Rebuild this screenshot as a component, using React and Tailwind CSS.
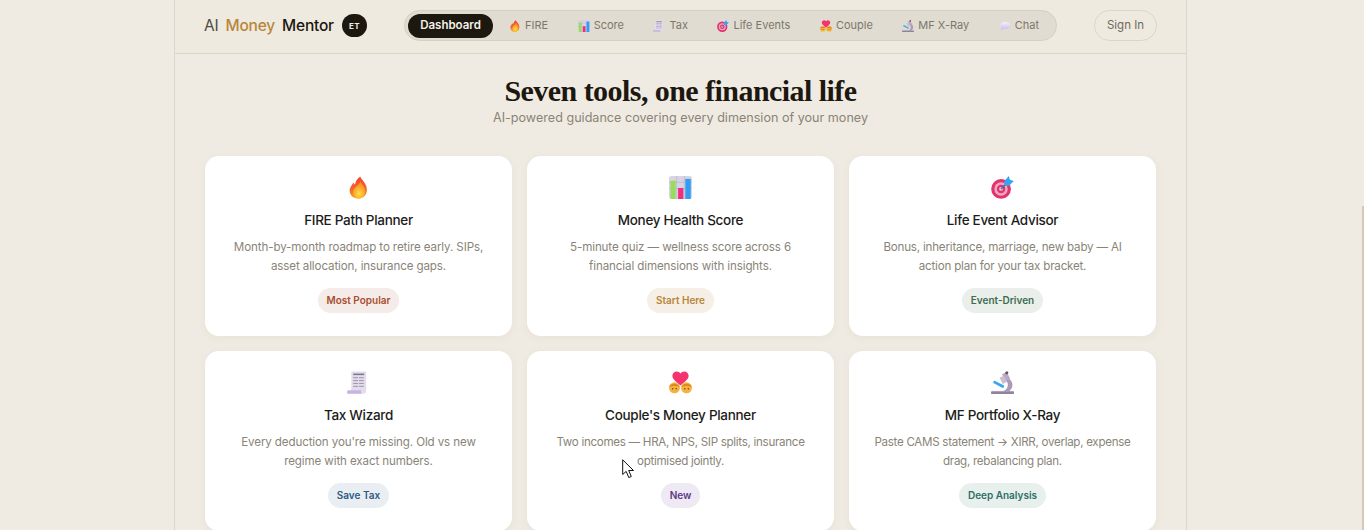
import React from "react";

const Flame = ({ s }) => (
  <svg width={s} height={s} viewBox="0 0 24 24" className="shrink-0">
    <defs>
      <linearGradient id="fl1" x1="0" y1="0" x2="0" y2="1">
        <stop offset="0" stopColor="#f4402e" />
        <stop offset="0.6" stopColor="#f0692c" />
        <stop offset="1" stopColor="#f9a02b" />
      </linearGradient>
      <radialGradient id="fl2" cx="0.5" cy="0.72" r="0.6">
        <stop offset="0" stopColor="#ffe13f" />
        <stop offset="1" stopColor="#fb8a22" />
      </radialGradient>
    </defs>
    <g transform="translate(-2.400 0) scale(1.200 1)">
      <path d="M13.500 0.500c.6 3.600 5.800 6.400 5.800 14 0 5.400-3.400 9-7.600 9-4.400 0-7.400-3.400-7.400-8 0-4 2.200-6 3.200-8.800.5 1 .9 1.800 1.400 2.400C9.400 5.600 11 2.500 13.500.5z" fill="url(#fl1)" />
      <path d="M13.800 5.500c.6 3 4.200 5.400 4.200 10.200 0 4.400-2.700 7.800-5.700 7.800-3.100 0-5.300-2.800-5.300-6.200 0-3 1.900-4.500 3.400-6.800.3-.5 2.600-2.400 3.400-5z" fill="url(#fl2)" />
    </g>
  </svg>
);

const Chart = ({ s }) => (
  <svg width={s} height={s} viewBox="0 0 24 24" className="shrink-0">
    <rect x="0" y="0" width="24" height="24" rx="2.500" fill="#d9d4e4" />
    <path d="M0 6.500h24M0 13h24M8 0v24M16 0v24" stroke="#b9b2c9" strokeWidth="0.7" />
    <rect x="1.500" y="5" width="5.500" height="19" fill="#97dc5c" />
    <rect x="9.500" y="12.500" width="5.500" height="11.500" fill="#ef2f7a" />
    <rect x="17" y="3" width="5.700" height="21" fill="#2f9ef5" />
  </svg>
);

const Target = ({ s }) => (
  <svg width={s} height={s} viewBox="0 0 24 24" className="shrink-0">
    <circle cx="10.500" cy="13.500" r="10.300" fill="#e2326f" />
    <circle cx="10.500" cy="13.500" r="7" fill="#f0a8c0" />
    <circle cx="10.500" cy="13.500" r="4.400" fill="#e2326f" />
    <circle cx="10.500" cy="13.500" r="2" fill="#e9c4d2" />
    <path d="M10.500 13.500 L18 6" stroke="#3a6db5" strokeWidth="1.500" />
    <path d="M13.500 6l5-6 1.300 4 4 1.200-5.300 5.300-4-.8z" fill="#35a4f2" />
  </svg>
);

const Receipt = ({ s }) => (
  <svg width={s} height={s} viewBox="0 0 24 24" className="shrink-0">
    <path d="M4.500 0.500h15.500v20c0 2-1 3-2.500 3H1c-.8 0-1-.6-1-1.200 0-.8.600-1.300 1.500-1.300h3z" fill="#e3dcec" />
    <path d="M0 22c0-1.200.8-1.800 1.800-1.800h13c-.5 1.200-.2 2.500.8 3.500H1.200C.4 23.700 0 23 0 22z" fill="#c6b5e2" />
    <path d="M6.500 3.500h11.500" stroke="#7d7590" strokeWidth="1.600" />
    <path d="M6.500 7h11.500M6.500 10h11.500M6.500 13h11.500M6.500 16h11.500" stroke="#9a92ab" strokeWidth="1" strokeDasharray="5 1" />
  </svg>
);

const Couple = ({ s }) => (
  <svg width={s} height={s} viewBox="0 0 24 24" className="shrink-0">
    <circle cx="5.700" cy="17.500" r="5.700" fill="#f7b23e" />
    <circle cx="18.300" cy="17.500" r="5.700" fill="#f7b23e" />
    <path d="M0.200 16.500c.8-4 9-4.500 11 0-3-1-7.500-1-11 0zM12.800 16.500c2-4.500 10.200-4 11 0-3.500-1-8-1-11 0z" fill="#d98a25" />
    <circle cx="3.800" cy="18.500" r=".8" fill="#6d4515" />
    <circle cx="7.500" cy="18.500" r=".8" fill="#6d4515" />
    <circle cx="16.500" cy="18.500" r=".8" fill="#6d4515" />
    <circle cx="20.200" cy="18.500" r=".8" fill="#6d4515" />
    <path d="M12 15C8.800 12.500 3.500 9 3.500 5 3.500 2.300 5.600.4 8 .4c1.700 0 3.200.8 4 2.300C12.800 1.200 14.300.4 16 .4c2.400 0 4.500 1.900 4.500 4.600 0 4-5.300 7.500-8.500 10z" fill="#f5346f" />
  </svg>
);

const Microscope = ({ s }) => (
  <svg width={s} height={s} viewBox="0 0 24 24" className="shrink-0">
    <path d="M16 7c4.300 1 6.800 4.500 6.300 8.700-.3 2.200-1.500 4-3.200 5.300h-6.500c2.700-1 4.800-3 5-6.200.2-2.500-1.100-4.300-3.300-5.300z" fill="#a99ab5" />
    <path d="M11.500 3.500l5-2.500 3.500 7-5 2.500z" fill="#b7a8c3" />
    <path d="M9 7l4.500-2.300 3.300 6.500-4.500 2.300z" fill="#c9bed3" />
    <circle cx="16.500" cy="1.800" r="1.600" fill="#5f5468" />
    <rect x="2" y="12.500" width="12" height="2.800" rx=".5" transform="rotate(28 8 14)" fill="#38a5f0" />
    <rect x="0" y="21" width="24" height="3" rx=".8" fill="#8f83a0" />
  </svg>
);

const Chat = ({ s }) => (
  <svg width={s} height={s} viewBox="0 0 24 24" className="shrink-0">
    <defs>
      <linearGradient id="ch1" x1="0" y1="0" x2="0" y2="1">
        <stop offset="0" stopColor="#f4f0fa" />
        <stop offset="1" stopColor="#c9b8ec" />
      </linearGradient>
    </defs>
    <path d="M13 4c6 0 10 3 10 7s-4 7-10 7c-1.300 0-2.500-.1-3.500-.4C8 19.500 6 20.500 3.500 20.500c1-1 1.800-2.300 2-4C3.200 15.200 2 13.200 2 11c0-4 5-7 11-7z" fill="url(#ch1)" />
  </svg>
);

const Cursor = () => (
  <svg width="14" height="20" viewBox="0 0 14 20" className="absolute left-[622px] top-[459px]">
    <path d="M0.700 0.800V15.500L4.200 12.400 6.800 18.600 9.300 17.500 6.700 11.500H11.500z" fill="#fff" stroke="#111" strokeWidth="1" />
  </svg>
);

const nav = [
  { label: "FIRE", Icon: Flame },
  { label: "Score", Icon: Chart },
  { label: "Tax", Icon: Receipt },
  { label: "Life Events", Icon: Target },
  { label: "Couple", Icon: Couple },
  { label: "MF X-Ray", Icon: Microscope },
  { label: "Chat", Icon: Chat },
];

const cards = [
  { Icon: Flame, title: "FIRE Path Planner", l1: "Month-by-month roadmap to retire early. SIPs,", l2: "asset allocation, insurance gaps.", tag: "Most Popular", tc: "bg-[#f5ebe8] text-[#a84e30]", dc: "tracking-[-0.12px]" },
  { Icon: Chart, title: "Money Health Score", l1: "5-minute quiz — wellness score across 6", l2: "financial dimensions with insights.", tag: "Start Here", tc: "bg-[#f5efe6] text-[#b8863b]", dc: "tracking-[-0.12px]" },
  { Icon: Target, title: "Life Event Advisor", l1: "Bonus, inheritance, marriage, new baby — AI", l2: "action plan for your tax bracket.", tag: "Event-Driven", tc: "bg-[#eaefeb] text-[#3f6b4f]", dc: "tracking-[-0.2px]" },
  { Icon: Receipt, title: "Tax Wizard", l1: "Every deduction you're missing. Old vs new", l2: "regime with exact numbers.", tag: "Save Tax", tc: "bg-[#e9eef3] text-[#2f5a85]", dc: "tracking-[-0.12px]" },
  { Icon: Couple, title: "Couple's Money Planner", l1: "Two incomes — HRA, NPS, SIP splits, insurance", l2: "optimised jointly.", tag: "New", tc: "bg-[#efe9f3] text-[#5b3a8a]", dc: "tracking-[-0.3px]" },
  { Icon: Microscope, title: "MF Portfolio X-Ray", l1: "Paste CAMS statement → XIRR, overlap, expense", l2: "drag, rebalancing plan.", tag: "Deep Analysis", tc: "bg-[#e8f0ee] text-[#2d6f68]", dc: "tracking-[-0.3px]" },
];

export default function App() {
  return (
    <div className="relative h-[530px] overflow-hidden bg-[#f0ebe2] font-['Inter',sans-serif]">
      <div className="ml-[174px] h-full w-[1013px] border-x border-[#dcd6c9]">
        <header className="flex h-[54px] items-center border-b border-[#dcd6c9] bg-[#eeeae0] pb-[2px] pl-[29px] pr-[29px]">
          <div className="flex w-[200px] shrink-0 items-center text-[15.5px] tracking-[-0.2px]">
            <span className="font-normal text-[#4f4a3f]">AI</span>
            <span className="ml-[7px] font-medium text-[#b8863b]">Money</span>
            <span className="ml-[7px] font-medium text-[#1c170f]">Mentor</span>
            <span className="ml-2 flex h-[23px] w-[25px] items-center justify-center rounded-full bg-[#1c170f] text-[8px] font-bold tracking-[0.4px] text-[#f0ebe2]">ET</span>
          </div>
          <nav className="flex h-[31px] w-[653px] shrink-0 items-center rounded-full border border-[#d5d0c2] bg-[#e0dcd1] pl-[3px]">
            <span className="flex h-[24px] w-[85px] shrink-0 items-center justify-center rounded-full bg-[#1c170f] text-[11.5px] font-semibold text-[#f5f1e8]">Dashboard</span>
            <div className="flex items-center pl-[16px]">
              {nav.map(({ label, Icon }) => (
                <span key={label} className="mr-[29.5px] flex items-center gap-[4px] whitespace-nowrap text-[11px] text-[#7d776b]">
                  <Icon s={12} />
                  {label}
                </span>
              ))}
            </div>
          </nav>
          <button className="ml-auto flex h-[31px] w-[63px] items-center justify-center rounded-full border border-[#dcd6c9] text-[11.5px] font-normal text-[#6f6a5e]">Sign In</button>
        </header>
        <main className="px-[30px]">
          <h1 className="mt-[19px] text-center font-['Liberation_Serif',serif] text-[30px] font-bold leading-[36px] tracking-[-0.55px] text-[#1c170f]">Seven tools, one financial life</h1>
          <p className="-mt-[1px] text-center text-[12.6px] leading-[20px] text-[#8a8478]">AI-powered guidance covering every dimension of your money</p>
          <div className="mt-[28px] grid grid-cols-3 gap-[15px]">
            {cards.map(({ Icon, title, l1, l2, tag, tc, dc }) => (
              <div key={title} className="flex h-[180px] flex-col items-center rounded-[14px] bg-white pt-[20px] shadow-[0_2px_8px_rgba(80,60,30,0.05)]">
                <Icon s={23} />
                <h2 className="mt-[11px] text-[13.5px] font-[550] leading-[20px] tracking-[-0.3px] text-[#1c1c1a]">{title}</h2>
                <p className={`mt-[8px] text-center text-[11.6px] leading-[19px] text-[#8a8478] ${dc}`}>
                  {l1}
                  <br />
                  {l2}
                </p>
                <span className={`mt-[12px] flex h-[25px] items-center rounded-full px-[8.5px] text-[10px] font-semibold ${tc}`}>{tag}</span>
              </div>
            ))}
          </div>
        </main>
      </div>
      <div className="absolute right-0 top-[206px] h-[324px] w-[2px] bg-[#d4c9b5]" />
      <Cursor />
    </div>
  );
}
